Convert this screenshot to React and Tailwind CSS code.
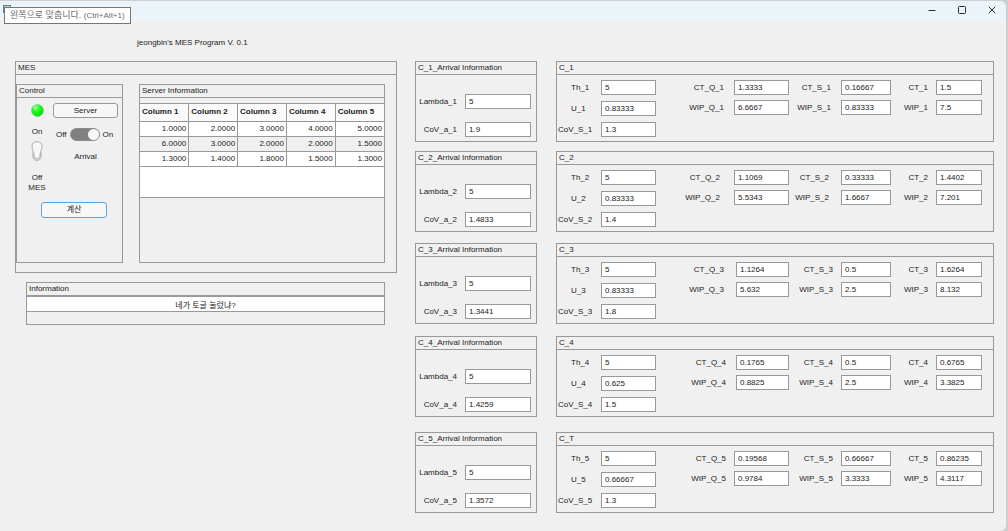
import React from 'react';
import { useState } from 'react';

const serverRows = [
  ["1.0000", "2.0000", "3.0000", "4.0000", "5.0000"],
  ["6.0000", "3.0000", "2.0000", "2.0000", "1.5000"],
  ["1.3000", "1.4000", "1.8000", "1.5000", "1.3000"],
]

const stations = [
  { id: 1, title: "C_1", lambda: "5", covA: "1.9", th: "5", u: "0.83333", covS: "1.3", ctQ: "1.3333", wipQ: "6.6667", ctS: "0.16667", wipS: "0.83333", ct: "1.5", wip: "7.5", space: "", gapQ: "gap-2.5", gapS: "gap-2.5", widthQ: "w-[55px]" },
  { id: 2, title: "C_2", lambda: "5", covA: "1.4833", th: "5", u: "0.83333", covS: "1.4", ctQ: "1.1069", wipQ: "5.5343", ctS: "0.33333", wipS: "1.6667", ct: "1.4402", wip: "7.201", space: "mt-[9px]", gapQ: "gap-3.5", gapS: "gap-3", widthQ: "w-[55px]" },
  { id: 3, title: "C_3", lambda: "5", covA: "1.3441", th: "5", u: "0.83333", covS: "1.8", ctQ: "1.1264", wipQ: "5.632", ctS: "0.5", wipS: "2.5", ct: "1.6264", wip: "8.132", space: "mt-[11px]", gapQ: "gap-3", gapS: "gap-2", widthQ: "w-[53px]" },
  { id: 4, title: "C_4", lambda: "5", covA: "1.4259", th: "5", u: "0.625", covS: "1.5", ctQ: "0.1765", wipQ: "0.8825", ctS: "0.5", wipS: "2.5", ct: "0.6765", wip: "3.3825", space: "mt-3", gapQ: "gap-2.5", gapS: "gap-2", widthQ: "w-[53px]" },
  { id: 5, title: "C_T", lambda: "5", covA: "1.3572", th: "5", u: "0.66667", covS: "1.3", ctQ: "0.19568", wipQ: "0.9784", ctS: "0.66667", wipS: "3.3333", ct: "0.86235", wip: "4.3117", space: "mt-[15px]", gapQ: "gap-2", gapS: "gap-2", widthQ: "w-[55px]" },
]

function Panel({title, className = "", children}) {
  return (
    <section className={"flex flex-col border border-[#999] " + className}>
      <h2 className="h-[13px] shrink-0 border-b border-[#999] pl-0.5 leading-[12px]">{title}</h2>
      {children}
    </section>
  )
}

function Field({name, value, gap = "gap-2", align = "text-right", width}) {
  return (
    <div className={"flex items-center " + gap}>
      <label htmlFor={name} className={"flex-1 whitespace-nowrap " + align}>{name}</label>
      <input
        id={name}
        type="text"
        defaultValue={value}
        className={"h-[15px] border border-[#999] bg-white px-[3px] outline-none " + width}
      />
    </div>
  )
}

function ArrivalPanel({data}) {
  return (
    <Panel title={"C_" + data.id + "_Arrival Information"}>
      <div className="flex flex-col gap-[13px] pt-[19px] pr-[5px] pb-1">
        <Field name={"Lambda_" + data.id} value={data.lambda} width="w-[66px]" />
        <Field name={"CoV_a_" + data.id} value={data.covA} width="w-[66px]" />
      </div>
    </Panel>
  )
}

function StationPanel({data}) {
  const n = data.id
  return (
    <Panel title={data.title}>
      <div className="grid grid-cols-[99fr_133fr_102fr_91fr] pt-[5px] pr-[11px] pb-1">
        <div className="flex flex-col gap-1.5">
          <Field name={"Th_" + n} value={data.th} gap="gap-0" align="pl-3.5" width="w-[55px]" />
          <Field name={"U_" + n} value={data.u} gap="gap-0" align="pl-3.5" width="w-[55px]" />
          <Field name={"CoV_S_" + n} value={data.covS} gap="gap-0" align="pl-px" width="w-[55px]" />
        </div>
        <div className="flex flex-col gap-[5px]">
          <Field name={"CT_Q_" + n} value={data.ctQ} gap={data.gapQ} width={data.widthQ} />
          <Field name={"WIP_Q_" + n} value={data.wipQ} gap={data.gapQ} width={data.widthQ} />
        </div>
        <div className="flex flex-col gap-[5px]">
          <Field name={"CT_S_" + n} value={data.ctS} gap={data.gapS} width="w-[50px]" />
          <Field name={"WIP_S_" + n} value={data.wipS} gap={data.gapS} width="w-[50px]" />
        </div>
        <div className="flex flex-col gap-[5px]">
          <Field name={"CT_" + n} value={data.ct} width="w-[46px]" />
          <Field name={"WIP_" + n} value={data.wip} width="w-[46px]" />
        </div>
      </div>
    </Panel>
  )
}

function Lamp() {
  return (
    <svg className="size-[13px]" viewBox="0 0 13 13" role="img" aria-label="MES status">
      <defs>
        <radialGradient id="lamp" cx="0.35" cy="0.25" r="0.8">
          <stop offset="0" stopColor="#b4ffb4" />
          <stop offset="0.4" stopColor="#1eff1e" />
          <stop offset="1" stopColor="#00dc00" />
        </radialGradient>
      </defs>
      <circle cx="6.5" cy="6.5" r="6" fill="url(#lamp)" stroke="#6fcf6f" strokeWidth="0.6" />
    </svg>
  )
}

function ControlPanel() {
  const [mesOn, setMesOn] = useState(true);
  const [arrivalOn, setArrivalOn] = useState(true);

  return (
    <Panel title="Control">
      <div className="flex pr-1 pl-1">
        <div className="flex w-8 flex-col items-center pt-1.5">
          <Lamp />
          <span className="mt-2.5">On</span>
          <label className="mt-1 cursor-pointer">
            <input type="checkbox" aria-label="MES" checked={mesOn} onChange={e => setMesOn(e.target.checked)} className="peer sr-only" />
            <svg className={mesOn ? "block h-5 w-3" : "block h-5 w-3 rotate-180"} viewBox="0 0 12 20">
              <rect x="1.8" y="9" width="8.4" height="10.5" rx="4.2" fill="#dcdcdc" stroke="#a8a8a8" strokeWidth="0.8" />
              <path d="M6 0.6C3 0.6 1 2.6 1 5.2C1 8.6 3 10.6 3 14.4C3 16.4 4.2 17.8 6 17.8C7.8 17.8 9 16.4 9 14.4C9 10.6 11 8.6 11 5.2C11 2.6 9 0.6 6 0.6Z" fill="#f7f7f7" stroke="#9a9a9a" strokeWidth="0.8" />
            </svg>
          </label>
          <span className="mt-3">Off</span>
          <span>MES</span>
        </div>
        <div className="flex flex-1 flex-col pt-[5px]">
          <button type="button" className="h-[15px] rounded-[3px] border border-[#999] bg-[#f7f7f7] leading-[12px]">Server</button>
          <div className="mt-2.5 flex items-center gap-[3px] pl-[3px]">
            <span>Off</span>
            <input
              type="checkbox"
              aria-label="Arrival"
              checked={arrivalOn}
              onChange={e => setArrivalOn(e.target.checked)}
              className="flex h-[13px] w-[30px] shrink-0 cursor-pointer appearance-none rounded-full border border-[#8c8c8c] bg-[#808080] before:size-[11px] before:rounded-full before:bg-[#f7f7f7] checked:justify-end"
            />
            <span>On</span>
          </div>
          <span className="mt-[11px] text-center">Arrival</span>
        </div>
      </div>
      <div className="pt-[9px] pl-6">
        <button type="button" className="h-4 w-[66px] rounded-[3px] border border-[#5aa5e0] bg-[#f7f7f7] leading-[12px]">계산</button>
      </div>
    </Panel>
  )
}

function ServerPanel() {
  return (
    <Panel title="Server Information">
      <div className="pt-[5px]">
        <div className="border-y border-[#999] bg-white pb-[30px]">
          <table className="w-full table-fixed border-collapse">
            <thead>
              <tr className="h-[17px] bg-[#fafafa]">
                {[1, 2, 3, 4, 5].map(n => (
                  <th key={n} className="border-r border-b border-[#999] pl-0.5 text-left font-bold last:border-r-0">Column {n}</th>
                ))}
              </tr>
            </thead>
            <tbody>
              {serverRows.map((row, index) => (
                <tr key={index} className="h-[15px] even:bg-[#f0f0f0]">
                  {row.map((cell, cellIndex) => (
                    <td key={cellIndex} className="border-r border-b border-[#999] pr-0.5 text-right last:border-r-0">{cell}</td>
                  ))}
                </tr>
              ))}
            </tbody>
          </table>
        </div>
      </div>
    </Panel>
  )
}

function WindowButton({label, path}) {
  return (
    <button type="button" aria-label={label}>
      <svg className="block size-2" viewBox="0 0 8 8" fill="none" stroke="#2a2a2a">
        <path d={path} />
      </svg>
    </button>
  )
}

function TitleBar() {
  return (
    <header className="relative flex h-5 items-center justify-end bg-[#eaf4f9] pr-2.5 pb-0.5">
      <span className="absolute top-1 left-[3px] size-2 border border-[#5f7f9f] bg-[#b8cfe0]"></span>
      <div role="tooltip" className="absolute top-1.5 left-1 z-10 flex h-[17px] items-center border border-[#767676] bg-white px-[5px] text-[9px] whitespace-nowrap text-[#6a6a6a]">
        <p>왼쪽으로 맞춥니다. <span className="text-[8px]">(Ctrl+Alt+1)</span></p>
      </div>
      <div className="flex gap-[22px]">
        <WindowButton label="Minimize" path="M0.5 4.5H7.5" />
        <WindowButton label="Maximize" path="M1.5 0.5H6.5Q7.5 0.5 7.5 1.5V6.5Q7.5 7.5 6.5 7.5H1.5Q0.5 7.5 0.5 6.5V1.5Q0.5 0.5 1.5 0.5Z" />
        <WindowButton label="Close" path="M0.8 0.8L7.2 7.2M7.2 0.8L0.8 7.2" />
      </div>
    </header>
  )
}

export default function App() {
  return (
    <div className="flex min-h-screen bg-[#cfcfcf] pt-px pr-0.5 font-['Liberation_Sans','Noto_Sans_CJK_KR',sans-serif] text-[8px] leading-[10px] text-[#222]">
      <div className="flex-1 overflow-hidden rounded-r-md bg-[#f0f0f0]">
        <TitleBar />
        <h1 className="mt-[17px] pl-[137px]">jeongbin's MES Program V. 0.1</h1>
        <main className="grid grid-cols-[382fr_579fr] items-start gap-[18px] pt-[13px] pr-3 pb-4 pl-[15px]">
          <div>
            <Panel title="MES">
              <div className="grid min-h-[197px] grid-cols-[107fr_246fr] gap-4 py-[9px] pr-[11px]">
                <ControlPanel />
                <ServerPanel />
              </div>
            </Panel>
            <Panel title="Information" className="mt-[9px] mr-3 ml-[11px] pb-3">
              <input
                type="text"
                aria-label="Information"
                defaultValue="네가 토글 눌렀냐?"
                className="h-4 w-full border-y border-[#999] bg-white text-center outline-none"
              />
            </Panel>
          </div>
          <div>
            {stations.map(data => (
              <div key={data.id} className={"grid grid-cols-[122fr_438fr] gap-[19px] " + data.space}>
                <ArrivalPanel data={data} />
                <StationPanel data={data} />
              </div>
            ))}
          </div>
        </main>
      </div>
    </div>
  )
}
